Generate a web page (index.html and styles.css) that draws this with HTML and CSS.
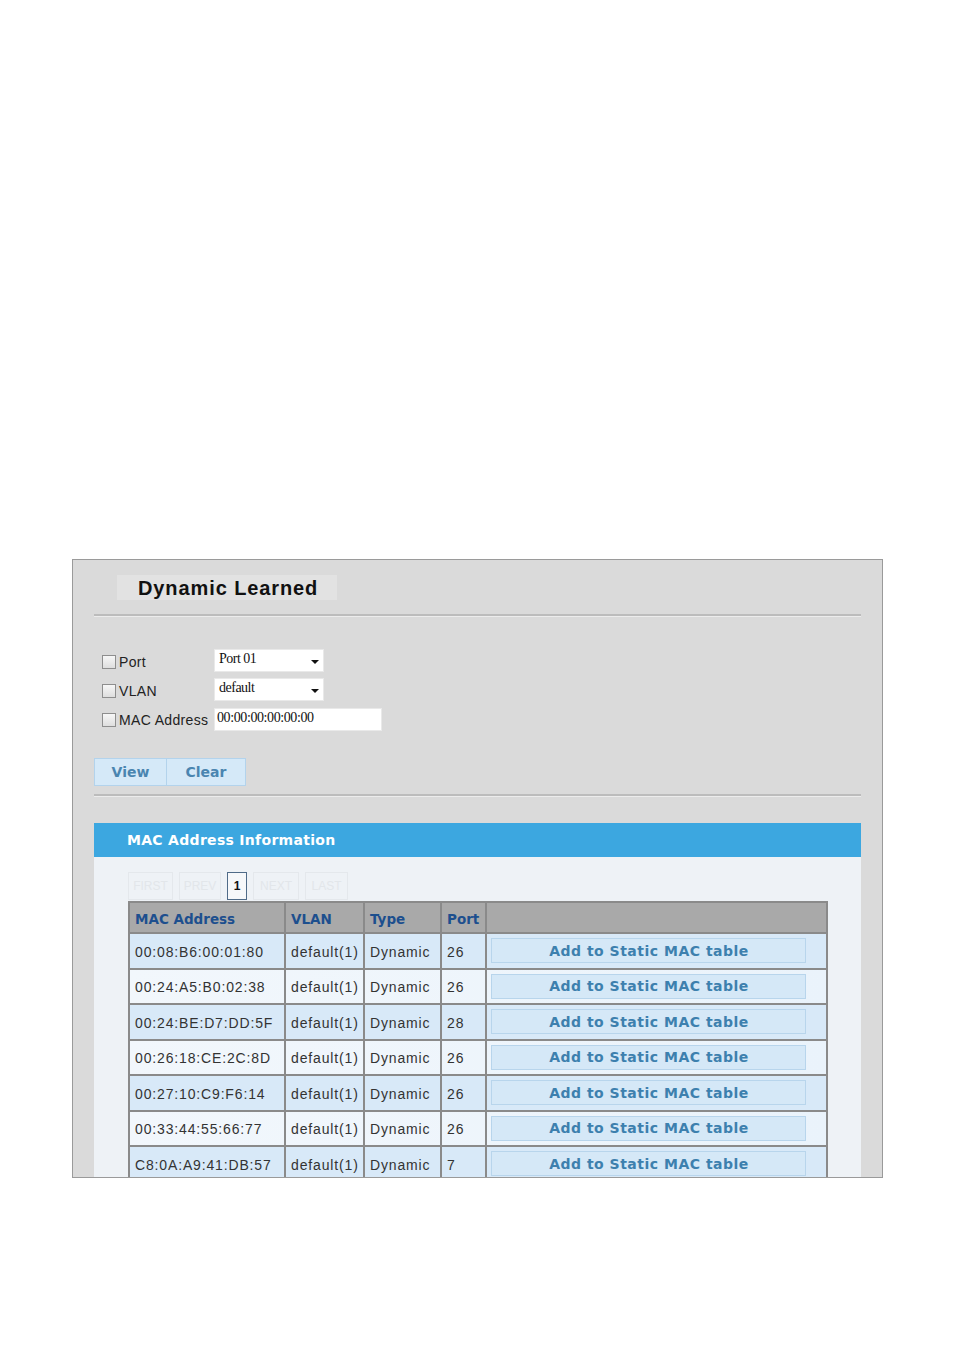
FILE: index.html
```html
<!doctype html>
<html lang="en-US">
<head>
  <meta charset="utf-8">
  <title>Dynamic Learned</title>
  <link rel="stylesheet" href="styles.css">
</head>
<body>

<div class="panel">
  <div class="panel-title">Dynamic Learned</div>
  <div class="rule"></div>

  <div class="filter">
    <div class="filter-row">
      <label class="filter-label"><input type="checkbox" class="chk"> Port</label>
      <div class="fake-select">Port 01<span class="caret"></span></div>
    </div>
    <div class="filter-row">
      <label class="filter-label"><input type="checkbox" class="chk"> VLAN</label>
      <div class="fake-select">default<span class="caret"></span></div>
    </div>
    <div class="filter-row">
      <label class="filter-label"><input type="checkbox" class="chk"> MAC Address</label>
      <input class="mac-field" type="text" value="00:00:00:00:00:00">
    </div>
  </div>

  <div class="actions">
    <button class="btn btn-view">View</button><button class="btn btn-clear">Clear</button>
  </div>
  <div class="rule rule-2"></div>

  <div class="section-head">MAC Address Information</div>
  <div class="section-body">
    <div class="pager">
      <span class="pg pg-off pg-first">FIRST</span>
      <span class="pg pg-off pg-prev">PREV</span>
      <span class="pg pg-on">1</span>
      <span class="pg pg-off pg-next">NEXT</span>
      <span class="pg pg-off pg-last">LAST</span>
    </div>

    <table class="mac-table">
      <colgroup>
        <col style="width:156px">
        <col style="width:79px">
        <col style="width:77px">
        <col style="width:45px">
        <col style="width:341px">
      </colgroup>
      <tr class="head">
        <th>MAC Address</th><th>VLAN</th><th>Type</th><th>Port</th><th></th>
      </tr>
      <tr class="row odd">
        <td>00:08:B6:00:01:80</td><td>default(1)</td><td>Dynamic</td><td>26</td>
        <td class="cell-btn"><button class="add-btn">Add to Static MAC table</button></td>
      </tr>
      <tr class="row even">
        <td>00:24:A5:B0:02:38</td><td>default(1)</td><td>Dynamic</td><td>26</td>
        <td class="cell-btn"><button class="add-btn">Add to Static MAC table</button></td>
      </tr>
      <tr class="row odd">
        <td>00:24:BE:D7:DD:5F</td><td>default(1)</td><td>Dynamic</td><td>28</td>
        <td class="cell-btn"><button class="add-btn">Add to Static MAC table</button></td>
      </tr>
      <tr class="row even">
        <td>00:26:18:CE:2C:8D</td><td>default(1)</td><td>Dynamic</td><td>26</td>
        <td class="cell-btn"><button class="add-btn">Add to Static MAC table</button></td>
      </tr>
      <tr class="row odd">
        <td>00:27:10:C9:F6:14</td><td>default(1)</td><td>Dynamic</td><td>26</td>
        <td class="cell-btn"><button class="add-btn">Add to Static MAC table</button></td>
      </tr>
      <tr class="row even">
        <td>00:33:44:55:66:77</td><td>default(1)</td><td>Dynamic</td><td>26</td>
        <td class="cell-btn"><button class="add-btn">Add to Static MAC table</button></td>
      </tr>
      <tr class="row odd">
        <td>C8:0A:A9:41:DB:57</td><td>default(1)</td><td>Dynamic</td><td>7</td>
        <td class="cell-btn"><button class="add-btn">Add to Static MAC table</button></td>
      </tr>
    </table>
  </div>
</div>

</body>
</html>
```

FILE: styles.css
```css
/* Page */
html {
  background-color: #fff;
}

body {
  margin: 0;
  font-family: "Liberation Sans", Arial, sans-serif;
  color: #222;
}

/* Outer gray panel, cut off at the bottom like the screenshot */
.panel {
  margin: 559px 0 0 72px;
  width: 767px;
  height: 617px;
  padding: 0 21px;
  border: 1px solid #9a9a9a;
  background-color: #dadada;
  overflow: hidden;
}

.panel-title {
  margin: 15px 0 0 23px;
  width: 199px;
  height: 25px;
  padding-left: 21px;
  background-color: #e2e2e2;
  font-size: 20px;
  font-weight: bold;
  letter-spacing: 0.9px;
  line-height: 26px;
  color: #111;
}

.rule {
  margin-top: 14px;
  border-top: 2px solid #bcbcbc;
  border-bottom: 1px solid #ececec;
}

.rule-2 {
  margin-top: 8px;
}

/* Filter form */
.filter {
  margin-top: 32px;
}

.filter-row {
  display: flex;
  align-items: center;
  height: 23px;
  margin-bottom: 6px;
}

.filter-label {
  display: flex;
  align-items: center;
  width: 120px;
  padding-left: 8px;
  box-sizing: border-box;
  white-space: nowrap;
  font-size: 14px;
  letter-spacing: 0.35px;
  color: #222;
  padding-top: 3px;
}

.chk {
  -webkit-appearance: none;
  appearance: none;
  width: 14px;
  height: 14px;
  margin: 0 3px 0 0;
  border: 1px solid #8e8e8e;
  background: linear-gradient(#f7f7f7, #dedede);
  box-sizing: border-box;
}

.fake-select {
  position: relative;
  width: 110px;
  height: 23px;
  box-sizing: border-box;
  padding: 1px 0 0 4px;
  background-color: #fff;
  border: 1px solid #e9e9e9;
  font-family: "Liberation Serif", "Times New Roman", serif;
  font-size: 14px;
  letter-spacing: -0.5px;
  color: #111;
}

.caret {
  position: absolute;
  right: 4px;
  top: 10px;
  border-left: 4px solid transparent;
  border-right: 4px solid transparent;
  border-top: 4px solid #111;
}

.mac-field {
  width: 168px;
  height: 23px;
  margin: 1px 0 0;
  box-sizing: border-box;
  padding: 0 0 3px 2px;
  border: 1px solid #e9e9e9;
  background-color: #fff;
  font-family: "Liberation Serif", "Times New Roman", serif;
  font-size: 14px;
  letter-spacing: -0.4px;
  color: #111;
  outline: none;
}

/* View / Clear */
.actions {
  display: flex;
  margin-top: 28px;
}

.btn {
  height: 28px;
  margin: 0;
  padding: 0;
  border: 1px solid #b3d3ec;
  background-color: #d5e9f8;
  font-family: "DejaVu Sans", Verdana, sans-serif;
  font-size: 14px;
  font-weight: bold;
  color: #4a85b0;
  cursor: pointer;
}

.btn-view {
  width: 73px;
}

.btn-clear {
  width: 79px;
  border-left: none;
}

/* Blue section header */
.section-head {
  margin-top: 26px;
  height: 34px;
  padding-left: 33px;
  background-color: #3ca7e0;
  font-family: "DejaVu Sans", Verdana, sans-serif;
  font-size: 14px;
  font-weight: bold;
  letter-spacing: 0.3px;
  line-height: 35px;
  color: #fff;
}

.section-body {
  height: 400px;
  padding: 15px 0 0 34px;
  background-color: #eef2f6;
}

/* Pager */
.pager {
  display: flex;
  gap: 5px;
  height: 28px;
  margin-bottom: 1px;
}

.pg {
  display: flex;
  align-items: center;
  justify-content: center;
  box-sizing: border-box;
  height: 28px;
  font-size: 12px;
  border: 1px solid #e4e8ec;
  color: #e2e6ea;
}

.pg-first { width: 45px; }
.pg-prev { width: 42px; margin-left: 1px; }
.pg-next { width: 46px; margin-left: 1px; }
.pg-last { width: 43px; margin-left: 1px; }

.pg-on {
  width: 20px;
  margin-left: 1px;
  border: 1px solid #4f6b88;
  background-color: #f6f8fa;
  color: #111;
  font-weight: bold;
}

/* MAC table */
.mac-table {
  width: 698px;
  table-layout: fixed;
  border-collapse: collapse;
}

.mac-table th,
.mac-table td {
  border: 2px solid #8a8a8a;
  padding: 0 0 0 5px;
  text-align: left;
  white-space: nowrap;
}

.mac-table .head {
  height: 31px;
  background-color: #a9a9a9;
}

.mac-table th {
  font-family: "DejaVu Sans", Verdana, sans-serif;
  font-size: 13.5px;
  font-weight: bold;
  color: #1d4f8e;
  padding-top: 2px;
}

.mac-table .row {
  height: 35.5px;
}

.mac-table td {
  font-size: 14px;
  letter-spacing: 0.85px;
  color: #333;
  padding-top: 2px;
}

.mac-table td.cell-btn {
  padding-left: 4px;
}

.row.odd {
  background-color: #d8e9f8;
}

.row.even {
  background: linear-gradient(to right, #f2f7fc, #eaf3fb);
}

.add-btn {
  display: block;
  width: 315px;
  height: 25px;
  margin: 0 0 2px 0;
  padding: 0 0 0 1px;
  border: 1px solid #b8d5ec;
  background-color: #d5e8f7;
  font-family: "DejaVu Sans", Verdana, sans-serif;
  font-size: 14px;
  font-weight: bold;
  letter-spacing: 0.5px;
  color: #3d80ae;
  cursor: pointer;
}
```
